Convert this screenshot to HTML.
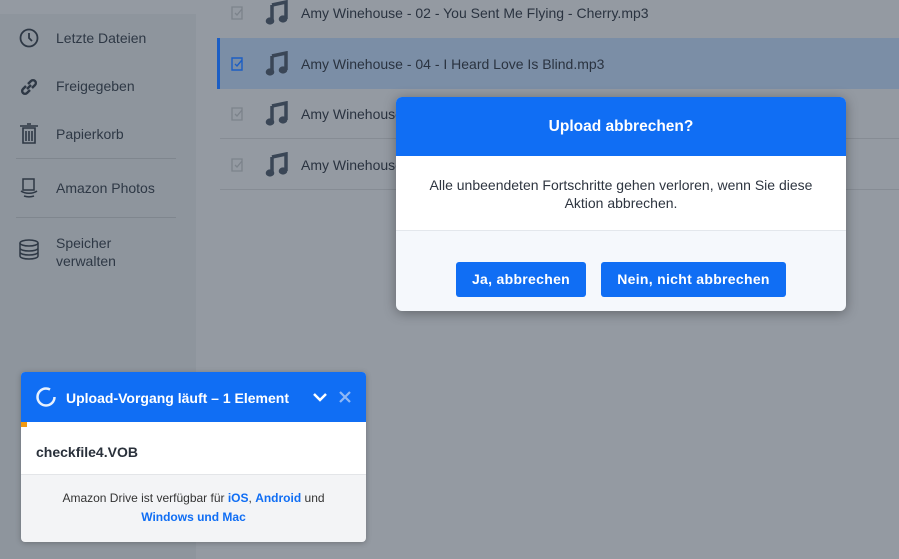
<!DOCTYPE html>
<html><head><meta charset="utf-8"><style>
*{margin:0;padding:0;box-sizing:border-box}
body{width:899px;height:559px;overflow:hidden;background:#949aa2;font-family:"Liberation Sans",Arial,sans-serif;position:relative;color:#2b3440}
.side{position:absolute;left:0;top:14px;width:196px;height:545px;background:#8e959d}
.nav{position:absolute;left:56px;font-size:14px;color:#2e3845}
.ico{position:absolute;left:18px}
.sep{position:absolute;left:16px;width:160px;height:1px;background:#7f868e}
.row{position:absolute;left:217px;width:682px;height:51px}
.row .t{position:absolute;left:84px;font-size:14px;color:#2a3340;top:50%;transform:translateY(-50%)}
.row .cb{position:absolute;left:14px;top:50%;margin-top:-7px}
.row .mn{position:absolute;left:48px;top:50%;margin-top:-13px}
.line{position:absolute;left:220px;width:679px;height:1px;background:#868c94}
.dlg{position:absolute;left:396px;top:97px;width:450px;height:214px;background:#f5f8fc;border-radius:6px;overflow:hidden;box-shadow:0 2px 12px rgba(0,0,0,.35)}
.dh{height:59px;background:#106ef4;color:#fff;font-weight:bold;font-size:15.5px;text-align:center;line-height:60px}
.db{height:75px;background:#fff;border-bottom:1px solid #e3e7ec;text-align:center;font-size:14px;line-height:18px;padding-top:20px;color:#2e3540}
.btn{position:absolute;top:165px;height:35px;background:#106ef4;color:#fff;font-weight:bold;font-size:14px;border-radius:3px;text-align:center;line-height:35px;letter-spacing:.3px}
.up{position:absolute;left:21px;top:372px;width:345px;height:170px;background:#f3f4f6;border-radius:4px;overflow:hidden;box-shadow:0 1px 6px rgba(0,0,0,.25)}
.uh{height:50px;background:#106ef4;color:#fff;font-weight:bold;font-size:14px;position:relative}
.uf{height:53px;background:#fff;border-bottom:1px solid #e3e5e8;position:relative;font-weight:bold;font-size:14px;padding:22px 0 0 15px;color:#2a313b}
.ft{text-align:center;font-size:12px;line-height:19px;padding-top:14px;color:#333}
.ft b{color:#106ef4}
</style></head><body>
<div class="side"></div>
<svg class="ico" style="top:27px" width="22" height="22" viewBox="0 0 22 22"><circle cx="11" cy="11" r="8.5" fill="none" stroke="#2e3845" stroke-width="1.8"/><path d="M11 6v5l3 3" fill="none" stroke="#2e3845" stroke-width="1.8"/></svg>
<div class="nav" style="top:30px">Letzte Dateien</div>
<svg class="ico" style="top:76px" width="22" height="22" viewBox="0 0 22 22"><path d="M9 13l4-4M8 10l-3 3a2.5 2.5 0 0 0 4 4l3-3M14 12l3-3a2.5 2.5 0 0 0-4-4l-3 3" fill="none" stroke="#2e3845" stroke-width="2.4"/></svg>
<div class="nav" style="top:78px">Freigegeben</div>
<svg class="ico" style="top:123px" width="22" height="22" viewBox="0 0 22 22"><path d="M2 3h18M5 5h12v15H5zM8 8v10M11 8v10M14 8v10M9 1h4" fill="none" stroke="#2e3845" stroke-width="1.6"/></svg>
<div class="nav" style="top:126px">Papierkorb</div>
<div class="sep" style="top:158px"></div>
<svg class="ico" style="top:176px" width="22" height="24" viewBox="0 0 22 24"><path d="M5 3h11v11H5zM3 15c4 3 12 3 16 0M6 20c3 1 7 1 10 0" fill="none" stroke="#2e3845" stroke-width="1.5"/></svg>
<div class="nav" style="top:180px">Amazon Photos</div>
<div class="sep" style="top:217px"></div>
<svg class="ico" style="top:238px" width="22" height="24" viewBox="0 0 22 24"><ellipse cx="11" cy="5" rx="9" ry="3" fill="none" stroke="#2e3845" stroke-width="1.5"/><path d="M2 5v13c0 4 18 4 18 0V5M2 10c0 4 18 4 18 0M2 14c0 4 18 4 18 0" fill="none" stroke="#2e3845" stroke-width="1.5"/></svg>
<div class="nav" style="top:234px;line-height:18px">Speicher<br>verwalten</div>

<div class="row" style="top:-13px"><svg class="cb" width="14" height="14"><path d="M1 1h10v12H1z M4 7l2 2 5-6" fill="none" stroke="#7c838b" stroke-width="1.3"/></svg><svg class="mn" width="24" height="26" viewBox="0 0 24 26"><path d="M7 5L21 2v17" fill="none" stroke="#3a4656" stroke-width="3.5"/><ellipse cx="5" cy="21" rx="4.3" ry="3.6" fill="#3a4656"/><ellipse cx="18" cy="19" rx="4.3" ry="3.6" fill="#3a4656"/><path d="M7 5v16" stroke="#3a4656" stroke-width="3.5"/></svg><div class="t">Amy Winehouse - 02 - You Sent Me Flying - Cherry.mp3</div></div>
<div class="row" style="top:38px;background:#7b8ea6;border-left:3px solid #1c5ec4;left:217px"><svg class="cb" style="left:11px" width="14" height="14"><path d="M1 1h10v12H1z M4 7l2 2 5-6" fill="none" stroke="#1c5ec4" stroke-width="1.4"/></svg><svg class="mn" style="left:45px" width="24" height="26" viewBox="0 0 24 26"><path d="M7 5L21 2v17" fill="none" stroke="#3a4656" stroke-width="3.5"/><ellipse cx="5" cy="21" rx="4.3" ry="3.6" fill="#3a4656"/><ellipse cx="18" cy="19" rx="4.3" ry="3.6" fill="#3a4656"/><path d="M7 5v16" stroke="#3a4656" stroke-width="3.5"/></svg><div class="t" style="left:81px">Amy Winehouse - 04 - I Heard Love Is Blind.mp3</div></div>
<div class="row" style="top:88px"><svg class="cb" width="14" height="14"><path d="M1 1h10v12H1z M4 7l2 2 5-6" fill="none" stroke="#7c838b" stroke-width="1.3"/></svg><svg class="mn" width="24" height="26" viewBox="0 0 24 26"><path d="M7 5L21 2v17" fill="none" stroke="#3a4656" stroke-width="3.5"/><ellipse cx="5" cy="21" rx="4.3" ry="3.6" fill="#3a4656"/><ellipse cx="18" cy="19" rx="4.3" ry="3.6" fill="#3a4656"/><path d="M7 5v16" stroke="#3a4656" stroke-width="3.5"/></svg><div class="t">Amy Winehouse</div></div>
<div class="line" style="top:138px"></div>
<div class="row" style="top:139px"><svg class="cb" width="14" height="14"><path d="M1 1h10v12H1z M4 7l2 2 5-6" fill="none" stroke="#7c838b" stroke-width="1.3"/></svg><svg class="mn" width="24" height="26" viewBox="0 0 24 26"><path d="M7 5L21 2v17" fill="none" stroke="#3a4656" stroke-width="3.5"/><ellipse cx="5" cy="21" rx="4.3" ry="3.6" fill="#3a4656"/><ellipse cx="18" cy="19" rx="4.3" ry="3.6" fill="#3a4656"/><path d="M7 5v16" stroke="#3a4656" stroke-width="3.5"/></svg><div class="t">Amy Winehouse</div></div>
<div class="line" style="top:189px"></div>

<div class="dlg"><div class="dh">Upload abbrechen?</div>
<div class="db">Alle unbeendeten Fortschritte gehen verloren, wenn Sie diese<br>Aktion abbrechen.</div>
<div class="btn" style="left:60px;width:130px">Ja, abbrechen</div>
<div class="btn" style="left:205px;width:185px">Nein, nicht abbrechen</div></div>

<div class="up"><div class="uh">
<svg style="position:absolute;left:14px;top:14px" width="22" height="22"><circle cx="11" cy="11" r="8.5" fill="none" stroke="#fff" stroke-width="2.5" stroke-dasharray="44 10" opacity=".9"/></svg>
<div style="position:absolute;left:45px;top:18px">Upload-Vorgang läuft – 1 Element</div>
<svg style="position:absolute;left:291px;top:18px" width="16" height="14"><path d="M2 4l6 6 6-6" fill="none" stroke="#fff" stroke-width="2.5"/></svg>
<svg style="position:absolute;left:317px;top:18px" width="14" height="14"><path d="M2 2l10 10M12 2L2 12" stroke="#8fb8f5" stroke-width="2.2"/></svg>
</div>
<div class="uf"><div style="position:absolute;left:0;top:0;width:6px;height:5px;background:#f39a10"></div>checkfile4.VOB</div>
<div class="ft">Amazon Drive ist verfügbar für <b>iOS</b>, <b>Android</b> und<br><b>Windows und Mac</b></div></div>
</body></html>
